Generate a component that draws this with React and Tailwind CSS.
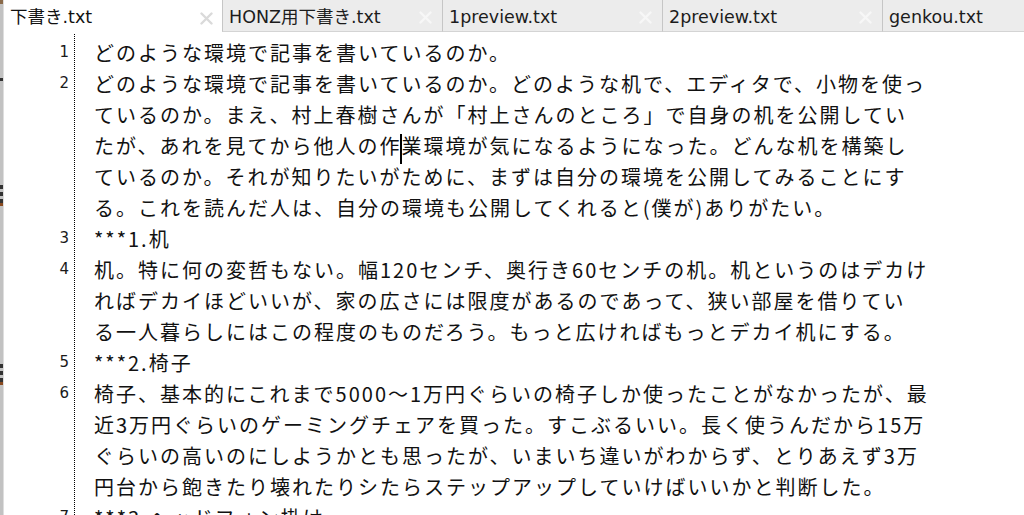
import React from "react";

const rows = [
  { n: 1, t: "どのような環境で記事を書いているのか。" },
  { n: 2, t: "どのような環境で記事を書いているのか。どのような机で、エディタで、小物を使っ" },
  { t: "ているのか。まえ、村上春樹さんが「村上さんのところ」で自身の机を公開してい" },
  { t: ["たが、あれを見てから他人の作", "業環境が気になるようになった。どんな机を構築し"] },
  { t: "ているのか。それが知りたいがために、まずは自分の環境を公開してみることにす" },
  { t: "る。これを読んだ人は、自分の環境も公開してくれると(僕が)ありがたい。" },
  { n: 3, t: "***1.机" },
  { n: 4, t: "机。特に何の変哲もない。幅120センチ、奥行き60センチの机。机というのはデカけ" },
  { t: "ればデカイほどいいが、家の広さには限度があるのであって、狭い部屋を借りてい" },
  { t: "る一人暮らしにはこの程度のものだろう。もっと広ければもっとデカイ机にする。" },
  { n: 5, t: "***2.椅子" },
  { n: 6, t: "椅子、基本的にこれまで5000〜1万円ぐらいの椅子しか使ったことがなかったが、最" },
  { t: "近3万円ぐらいのゲーミングチェアを買った。すこぶるいい。長く使うんだから15万" },
  { t: "ぐらいの高いのにしようかとも思ったが、いまいち違いがわからず、とりあえず3万" },
  { t: "円台から飽きたり壊れたりシたらステップアップしていけばいいかと判断した。" },
  { n: 7, t: "***3.ヘッドフォン掛け" },
];

function Close({ color }) {
  return (
    <svg width="13" height="13" viewBox="0 0 13 13" className="shrink-0">
      <path d="M1.5 1.5 L11.5 11.5 M11.5 1.5 L1.5 11.5" stroke={color} strokeWidth="2.4" strokeLinecap="round" />
    </svg>
  );
}

function Tab({ label, active, last }) {
  if (active) {
    return (
      <div className="w-[218px] h-[32px] shrink-0 bg-white flex items-center justify-between pl-[6px] pr-[9px] pt-[4px]">
        <span className="text-[#111]">{label}</span>
        <Close color="#dadada" />
      </div>
    );
  }
  return (
    <div
      className={
        (last ? "flex-1 " : "w-[220px] shrink-0 ") +
        "h-[32px] bg-[#ececec] border-l border-l-[#c6c6c6] border-b border-b-[#d4d4d4] flex items-center justify-between pl-[6px] pr-[10px] pt-[4px]"
      }
    >
      <span className="text-[#1c1c1c]">{label}</span>
      {!last && <Close color="#f7f7f7" />}
    </div>
  );
}

export default function App() {
  return (
    <div className="w-[1024px] h-[515px] overflow-hidden bg-white flex">
      <div className="w-[4px] shrink-0 bg-[#c2c2c2] border-r border-r-[#dedede] flex flex-col">
        <div className="h-[4px] bg-[#8a6a4a]" />
        <div className="h-[74px]" />
        <div className="h-[3px] bg-[#333]" />
        <div className="h-[104px]" />
        <div className="h-[4px] bg-[#333]" />
        <div className="h-[3px]" />
        <div className="h-[4px] bg-[#333]" />
        <div className="h-[3px]" />
        <div className="h-[4px] bg-[#333]" />
        <div className="h-[3px] bg-[#8a4a20]" />
        <div className="h-[158px]" />
        <div className="h-[4px] bg-[#333]" />
        <div className="h-[3px]" />
        <div className="h-[4px] bg-[#333]" />
        <div className="h-[3px]" />
        <div className="h-[4px] bg-[#333]" />
        <div className="h-[3px] bg-[#8a4a20]" />
      </div>
      <div className="flex-1 flex flex-col min-w-0">
        <div className="flex text-[17.5px] leading-none" style={{ fontFamily: '"DejaVu Sans", "Noto Sans CJK JP", sans-serif' }}>
          <Tab label="下書き.txt" active />
          <Tab label="HONZ用下書き.txt" />
          <Tab label="1preview.txt" />
          <Tab label="2preview.txt" />
          <Tab label="genkou.txt" last />
        </div>
        <div className="flex-1 flex pt-[5px]">
          <div className="w-[65px] shrink-0 flex flex-col text-right text-[15px] leading-[31px] text-[#1a1a1a]" style={{ fontFamily: '"DejaVu Sans", sans-serif' }}>
            {rows.map((r, i) => (
              <div key={i} className="h-[31px]">{r.n || ""}</div>
            ))}
          </div>
          <div className="ml-[5px] -mt-[3px] pt-[3px] border-l border-dotted border-l-[#000] pl-[19px] flex-1 flex flex-col">
            {rows.map((r, i) => (
              <div
                key={i}
                className="h-[31px] leading-[31px] whitespace-nowrap text-[20px] tracking-[2px] text-[#111]"
                style={{ fontFamily: '"Noto Sans CJK JP", sans-serif' }}
              >
                {Array.isArray(r.t) ? (
                  <>
                    {r.t[0]}
                    <span className="inline-block w-[2px] h-[30px] bg-black align-middle -ml-[2px]" />
                    {r.t[1]}
                  </>
                ) : (
                  r.t
                )}
              </div>
            ))}
          </div>
        </div>
      </div>
    </div>
  );
}
